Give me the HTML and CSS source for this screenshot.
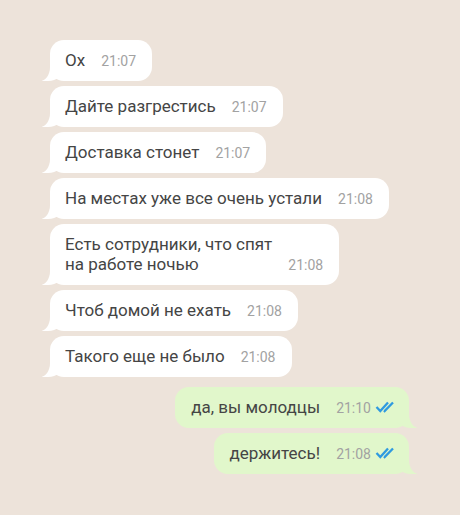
FILE: index.html
```html
<!DOCTYPE html>
<html lang="ru">
<head>
  <meta charset="UTF-8">
  <title>Chat</title>
  <link rel="stylesheet" href="styles.css">
</head>
<body>
  <div id="chat">
    <div class="msg in"><span class="text">Ох</span><span class="time">21:07</span></div>
    <div class="msg in"><span class="text">Дайте разгрестись</span><span class="time">21:07</span></div>
    <div class="msg in"><span class="text">Доставка стонет</span><span class="time">21:07</span></div>
    <div class="msg in"><span class="text">На местах уже все очень устали</span><span class="time">21:08</span></div>
    <div class="msg in"><span class="text">Есть сотрудники, что спят<br>на работе ночью</span><span class="time">21:08</span></div>
    <div class="msg in"><span class="text">Чтоб домой не ехать</span><span class="time">21:08</span></div>
    <div class="msg in"><span class="text">Такого еще не было</span><span class="time">21:08</span></div>
    <div class="msg out first"><span class="text">да, вы молодцы</span><span class="time">21:10</span><svg class="ticks" width="22" height="12" viewBox="0 0 22 12"><path d="M1.5 6l3.8 4L13 1.5M9 9.5l0.6 0.6L18 1.5" fill="none" stroke="#2f9ae0" stroke-width="2.3"/></svg></div>
    <div class="msg out"><span class="text">держитесь!</span><span class="time">21:08</span><svg class="ticks" width="22" height="12" viewBox="0 0 22 12"><path d="M1.5 6l3.8 4L13 1.5M9 9.5l0.6 0.6L18 1.5" fill="none" stroke="#2f9ae0" stroke-width="2.3"/></svg></div>
  </div>
</body>
</html>
```

FILE: styles.css
```css
body {
  margin: 0;
  background-color: #ede3da;
  font-family: Roboto, "Noto Sans", sans-serif;
  width: 460px;
  height: 515px;
  overflow: hidden;
}
#chat {
  display: flex;
  flex-direction: column;
  gap: 5px;
  padding: 40px 51px 0 50px;
}
.msg {
  position: relative;
  display: flex;
  align-items: last baseline;
  gap: 16px;
  padding: 10px 16px 11px 15px;
  border-radius: 14px;
  background-color: #fff;
  color: #454545;
}
.msg.in {
  align-self: flex-start;
}
.msg.out {
  align-self: flex-end;
  background-color: #e1f7cb;
  padding-left: 16px;
  padding-right: 12px;
  gap: 0;
}
.msg.first {
  margin-top: 5px;
}
.text {
  font-size: 17px;
  line-height: 20px;
}
.time {
  font-size: 14px;
  color: #a2a2a2;
}
.out .time {
  margin-left: 16px;
  margin-right: 4px;
}
.ticks {
  align-self: center;
}
.msg::before,
.msg::after {
  content: "";
  position: absolute;
  bottom: 0;
  height: 18px;
}
.in::before {
  left: -8px;
  width: 22px;
  background-color: #fff;
  border-bottom-right-radius: 16px 14px;
}
.in::after {
  left: -12px;
  width: 12px;
  background-color: #ede3da;
  border-bottom-right-radius: 10px 14px;
}
.out::before {
  right: -8px;
  width: 22px;
  background-color: #e1f7cb;
  border-bottom-left-radius: 16px 14px;
}
.out::after {
  right: -12px;
  width: 12px;
  background-color: #ede3da;
  border-bottom-left-radius: 10px 14px;
}
```
